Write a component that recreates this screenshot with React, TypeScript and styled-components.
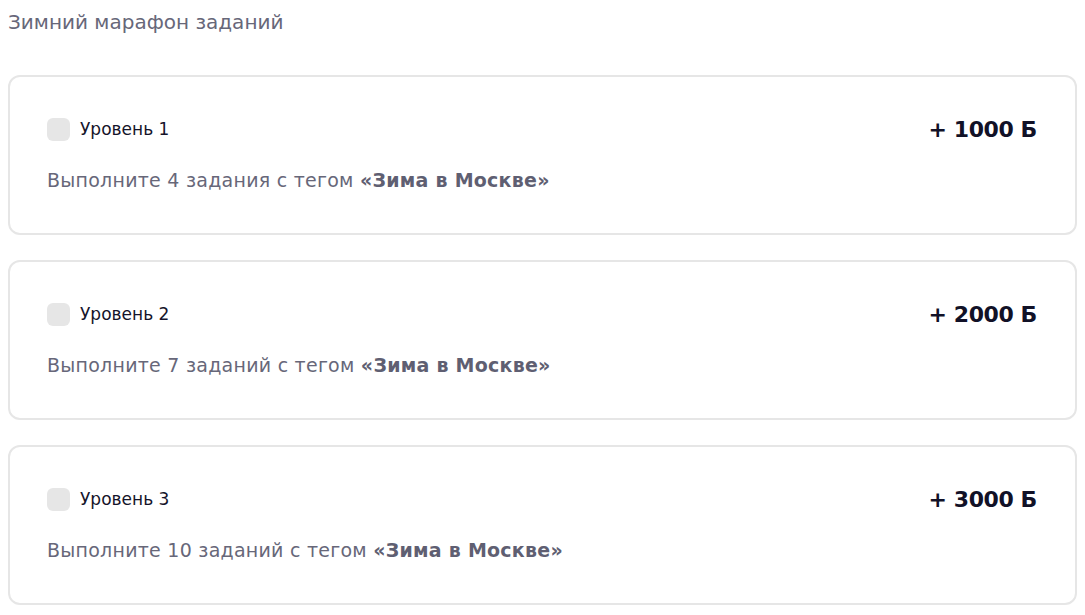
import React from 'react';
import styled, { createGlobalStyle } from 'styled-components';

interface Level {
    id: number;
    count: number;
    word: string;
    points: number;
}

const levels: Level[] = [
    { id: 1, count: 4, word: 'задания', points: 1000 },
    { id: 2, count: 7, word: 'заданий', points: 2000 },
    { id: 3, count: 10, word: 'заданий', points: 3000 },
];

const GlobalStyle = createGlobalStyle`
    body {
        margin: 8px;
        background: #ffffff;
        font-family: "DejaVu Sans", "Noto Sans", sans-serif;
    }
`;

const Page = styled.div`
    display: flex;
    flex-direction: column;
`;

const Title = styled.h2`
    margin: 0 0 39px 0;
    font-size: 20px;
    line-height: 28px;
    font-weight: 400;
    color: #676779;
`;

const List = styled.div`
    display: flex;
    flex-direction: column;
    gap: 25px;
`;

const Card = styled.div`
    border: 2px solid #e6e6e6;
    border-radius: 12px;
    padding: 38px 38px 41px 37px;
    display: flex;
    flex-direction: column;
    gap: 25px;
`;

const Header = styled.div`
    display: flex;
    justify-content: space-between;
    align-items: center;
    height: 28px;
`;

const LevelLabel = styled.label`
    display: flex;
    align-items: center;
    gap: 10px;
    font-size: 17px;
    color: #15142a;
`;

const Check = styled.span`
    width: 23px;
    height: 23px;
    border-radius: 6px;
    background: #e6e6e6;
`;

const Points = styled.div`
    font-size: 22px;
    font-weight: 700;
    letter-spacing: -0.4px;
    color: #111127;
`;

const Description = styled.p`
    margin: 0;
    font-size: 19px;
    line-height: 24px;
    letter-spacing: 0.25px;
    color: #676779;

    b {
        font-weight: 700;
        color: #5f5f72;
    }
`;

const App: React.FC = () => {
    return (
        <Page>
            <GlobalStyle />
            <Title>Зимний марафон заданий</Title>
            <List>
                {levels.map((lvl) => (
                    <Card key={lvl.id}>
                        <Header>
                            <LevelLabel>
                                <Check />
                                Уровень {lvl.id}
                            </LevelLabel>
                            <Points>+ {lvl.points} Б</Points>
                        </Header>
                        <Description>
                            Выполните {lvl.count} {lvl.word} с тегом <b>«Зима в Москве»</b>
                        </Description>
                    </Card>
                ))}
            </List>
        </Page>
    );
};

export default App;
